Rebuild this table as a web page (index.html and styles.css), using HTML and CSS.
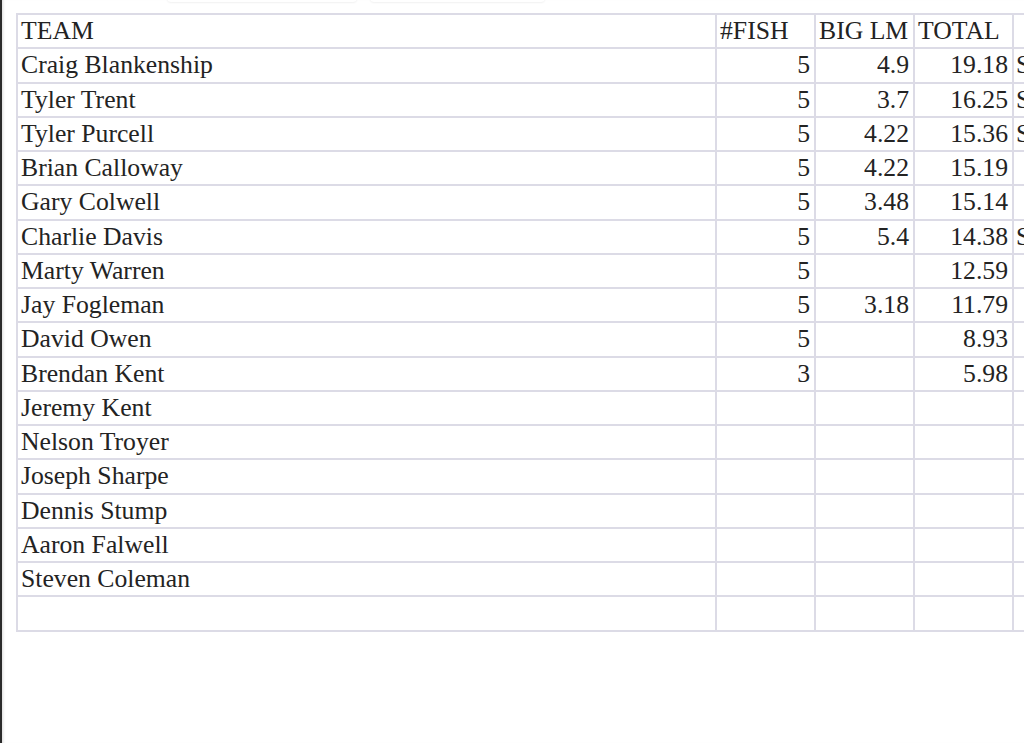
FILE: index.html
```html
<!DOCTYPE html>
<html>
<head>
<meta charset="utf-8">
<link rel="stylesheet" href="styles.css">
</head>
<body>
<div class="frame">
  <div class="topbar"><span class="tab tab-a"></span><span class="tab tab-b"></span></div>
  <table class="sheet">
    <colgroup>
      <col class="c-team"><col class="c-num"><col class="c-num"><col class="c-num"><col class="c-extra">
    </colgroup>
    <tr><td>TEAM</td><td class="hd">#FISH</td><td class="hd">BIG LM</td><td class="hd">TOTAL</td><td></td></tr>
    <tr><td>Craig Blankenship</td><td class="n">5</td><td class="n">4.9</td><td class="n">19.18</td><td class="x">S</td></tr>
    <tr><td>Tyler Trent</td><td class="n">5</td><td class="n">3.7</td><td class="n">16.25</td><td class="x">S</td></tr>
    <tr><td>Tyler Purcell</td><td class="n">5</td><td class="n">4.22</td><td class="n">15.36</td><td class="x">S</td></tr>
    <tr><td>Brian Calloway</td><td class="n">5</td><td class="n">4.22</td><td class="n">15.19</td><td></td></tr>
    <tr><td>Gary Colwell</td><td class="n">5</td><td class="n">3.48</td><td class="n">15.14</td><td></td></tr>
    <tr><td>Charlie Davis</td><td class="n">5</td><td class="n">5.4</td><td class="n">14.38</td><td class="x">S</td></tr>
    <tr><td>Marty Warren</td><td class="n">5</td><td class="n"></td><td class="n">12.59</td><td></td></tr>
    <tr><td>Jay Fogleman</td><td class="n">5</td><td class="n">3.18</td><td class="n">11.79</td><td></td></tr>
    <tr><td>David Owen</td><td class="n">5</td><td class="n"></td><td class="n">8.93</td><td></td></tr>
    <tr><td>Brendan Kent</td><td class="n">3</td><td class="n"></td><td class="n">5.98</td><td></td></tr>
    <tr><td>Jeremy Kent</td><td></td><td></td><td></td><td></td></tr>
    <tr><td>Nelson Troyer</td><td></td><td></td><td></td><td></td></tr>
    <tr><td>Joseph Sharpe</td><td></td><td></td><td></td><td></td></tr>
    <tr><td>Dennis Stump</td><td></td><td></td><td></td><td></td></tr>
    <tr><td>Aaron Falwell</td><td></td><td></td><td></td><td></td></tr>
    <tr><td>Steven Coleman</td><td></td><td></td><td></td><td></td></tr>
    <tr><td></td><td></td><td></td><td></td><td></td></tr>
  </table>
</div>
</body>
</html>
```
FILE: styles.css
```css
html, body {
  margin: 0;
  padding: 0;
  background: #ffffff;
}
body {
  width: 1024px;
  height: 743px;
  overflow: hidden;
}
.frame {
  position: relative;
  width: 1022px;
  height: 743px;
  border-left: 2px solid #2b2b2b;
  overflow: hidden;
  box-shadow: inset 3px 0 3px -2px rgba(0,0,0,0.15);
}
.topbar {
  height: 13px;
  position: relative;
}
.tab {
  position: absolute;
  top: -6px;
  height: 8px;
  background: #fff;
  border-radius: 6px;
  box-shadow: 0 1px 2px rgba(0,0,0,0.06);
}
.tab-a { left: 165px; width: 190px; }
.tab-b { left: 368px; width: 175px; }
.sheet {
  margin-left: 14px;
  border-collapse: collapse;
  table-layout: fixed;
  width: 1060px;
  font-family: "Liberation Serif", "Times New Roman", serif;
  font-size: 25.7px;
  color: #232323;
  background: #fff;
}
.c-team { width: 699px; }
.c-num { width: 99px; }
.c-extra { width: 64px; }
.sheet td {
  border: 2px solid #dcdbe6;
  height: 32.25px;
  padding: 0 4px 0 3px;
  white-space: nowrap;
  overflow: hidden;
  line-height: 30px;
  vertical-align: middle;
}
.sheet td.n { text-align: right; }
.sheet td.hd { text-align: left; padding-left: 3px; }
.sheet td.x { padding-left: 2px; }
```
